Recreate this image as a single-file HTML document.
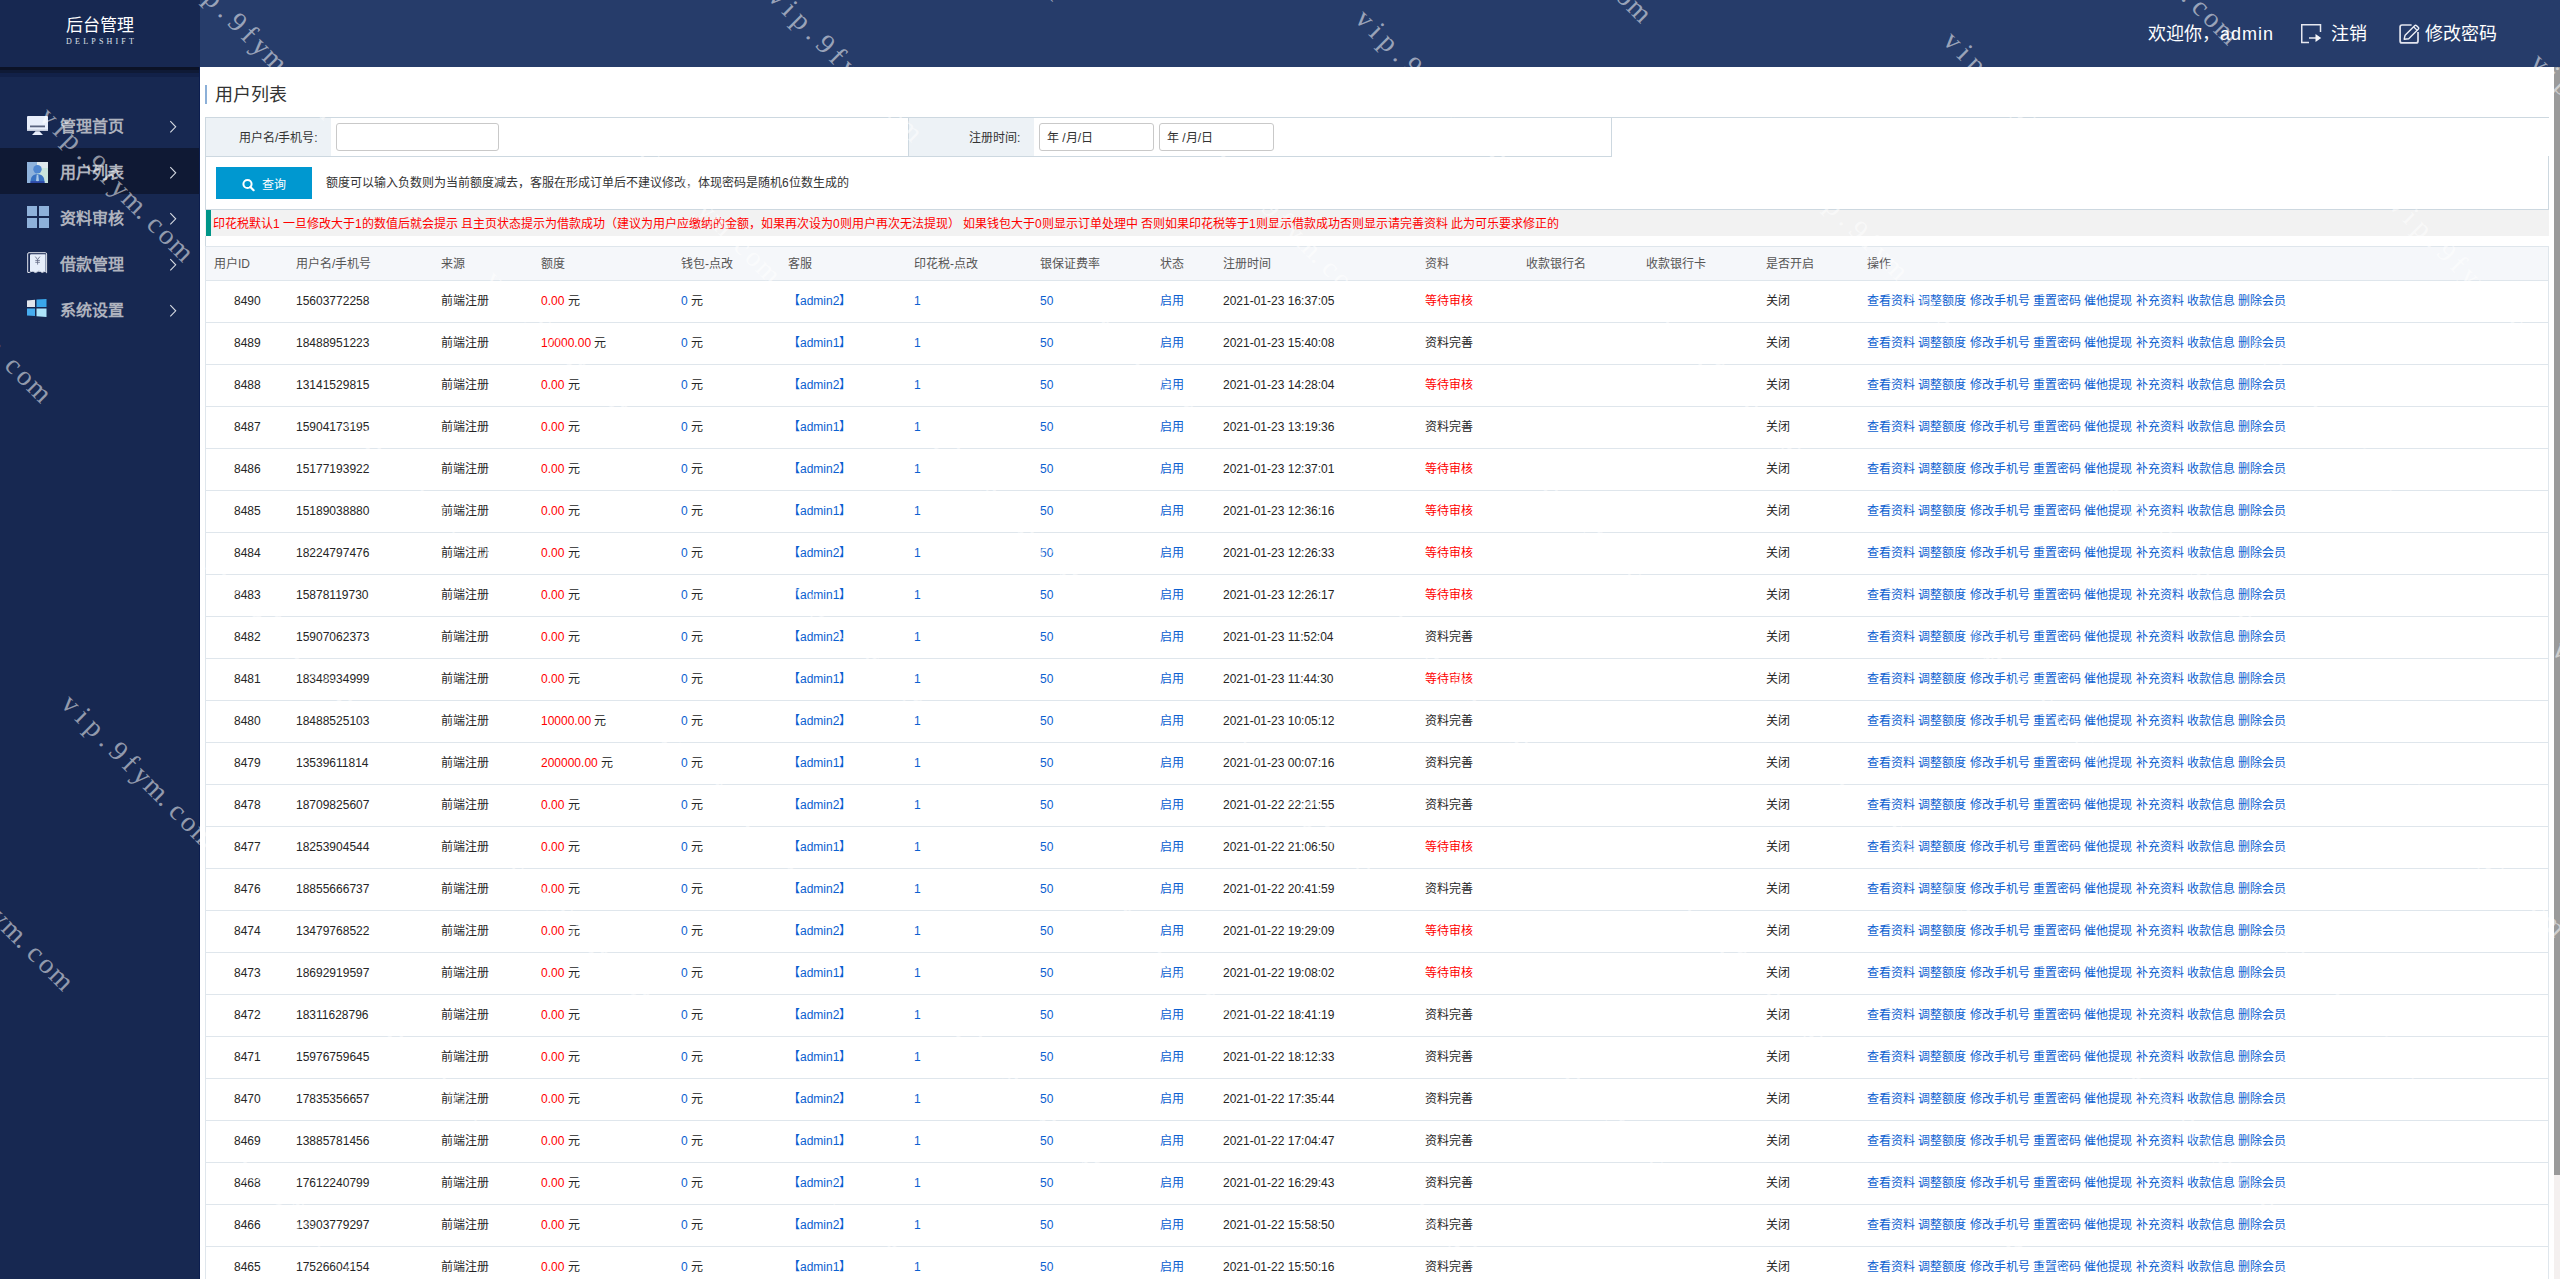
<!DOCTYPE html><html lang="zh-CN"><head><meta charset="utf-8"><title>用户列表</title><style>
*{margin:0;padding:0;box-sizing:border-box}
html,body{width:2560px;height:1279px;overflow:hidden;background:#fff}
body{position:relative;font-family:"Liberation Sans",sans-serif;font-size:12px;color:#333}
.abs{position:absolute}
#side{position:absolute;left:0;top:0;width:200px;height:1279px;background:#172851}
#logo{position:absolute;left:0;top:0;width:200px;height:67px;background:#172851}
#logo .t{position:absolute;left:0;width:200px;top:16px;text-align:center;color:#fff;font-size:17px;line-height:20px}
#logo .s{position:absolute;left:0;width:200px;top:38px;text-align:center;color:#dfe3ea;font-size:8px;line-height:8px;letter-spacing:3.2px;font-family:"Liberation Serif",serif;padding-left:3.2px;transform:scaleY(0.9)}
#logoshadow{position:absolute;left:0;top:67px;width:199px;height:10px;background:linear-gradient(to bottom,#0b1226 0,#0b1226 3px,#0f1a36 3px,#0f1a36 6px,#122148 6px,#122148 10px,#172851 10px)}
.mi{position:absolute;left:0;width:200px;height:46px}
.mi.on{background:#0f1934}
.mi .ic{position:absolute;left:27px;top:13px;width:22px;height:22px}
.mi .tx{position:absolute;left:60px;top:16px;font-size:16px;line-height:18px;color:#afb3be;font-weight:600}
.mi .ch{position:absolute;left:169px;top:18px;width:8px;height:14px}
#hdr{position:absolute;left:200px;top:0;width:2360px;height:67px;background:#263c6a}
#hdr .w{position:absolute;top:24px;font-size:18px;line-height:20px;color:#fff;white-space:nowrap}
#sb{position:absolute;left:2554px;top:67px;width:6px;height:1212px;background:#f4f0ef}
#sbt{position:absolute;left:2554px;top:67px;width:6px;height:1108px;background:#9a9a9a}
#ttl{position:absolute;left:215px;top:85px;font-size:18px;line-height:20px;color:#333}
#ttlbar{position:absolute;left:205px;top:85px;width:2px;height:19px;background:#8cb0d8}
.line{position:absolute;background:#cdd8e0}
.cell{position:absolute;background:#edf2f6}
.lbl{position:absolute;font-size:12px;line-height:14px;color:#333;white-space:nowrap}
.inp{position:absolute;height:28px;border:1px solid #c9c9c9;border-radius:3px;background:#fff}
.inp span{position:absolute;left:7px;top:7px;font-size:12px;line-height:14px;color:#333}
#btn{position:absolute;left:216px;top:167px;width:96px;height:32px;background:#0098d0}
#note{position:absolute;left:326px;top:176px;font-size:12px;line-height:14px;color:#333;white-space:nowrap}
#red{position:absolute;left:205px;top:210px;width:2344px;height:26px;background:#f2f2f2}
#redbar{position:absolute;left:206px;top:210px;width:5px;height:26px;background:#009688}
#redtx{position:absolute;left:213px;top:217px;font-size:12px;line-height:14px;color:#ff0000;white-space:nowrap}
#thead{position:absolute;left:205px;top:246px;width:2344px;height:35px;background:#f5f7fa;border:1px solid #dfe6ec}
.th{position:absolute;top:10px;font-size:12px;line-height:14px;color:#555555;white-space:nowrap}
.tr{position:absolute;left:205px;width:2344px;height:42px;border:1px solid #dfe6ec;border-top:none;background:#fff}
.td{position:absolute;top:13px;font-size:12px;line-height:14px;color:#252525;white-space:nowrap}
.r{color:#ff0000}
.b{color:#0b60d0}
.wm{position:absolute;font-family:"Liberation Serif",serif;font-size:28px;line-height:28px;color:rgba(255,255,255,0.55);transform-origin:0 0;transform:rotate(45deg);white-space:nowrap;pointer-events:none}
.wm i{font-style:normal;display:inline-block;width:16.8px;text-align:center}
</style></head><body>
<div id="side">
<div id="logo"><div class="t">后台管理</div><div class="s">DELPSHIFT</div></div><div id="logoshadow"></div>
<div class="mi" style="top:102px"><svg class="ic" viewBox="0 0 22 22" width="22" height="22"><rect x="0" y="1" width="21" height="15" rx="1" fill="#e8eefb"/><rect x="3" y="10.5" width="15" height="1.8" fill="#5a6480"/><rect x="0" y="14.5" width="21" height="1.5" fill="#c4cbdc"/><path d="M8.5 16.2 L12.5 16.2 L16 20 L5 20 Z" fill="#e8eefb"/></svg><div class="tx">管理首页</div><svg class="ch" viewBox="0 0 8 14" width="8" height="14"><path d="M1.3 1.2 L6.7 6.8 L1.3 12.4" fill="none" stroke="#d6dae2" stroke-width="1.1"/></svg></div>
<div class="mi on" style="top:148px"><svg class="ic" style="top:14px" viewBox="0 0 22 22" width="22" height="22"><rect x="0" y="0" width="21" height="21" fill="#dfe8ec"/><rect x="0" y="0" width="10" height="21" fill="#8fb3dc"/><rect x="10" y="6" width="11" height="15" fill="#c8e4dc"/><circle cx="10.5" cy="7.2" r="4.2" fill="#4f86d0"/><path d="M3.5 21 C3.5 14.5 6 12.3 10.5 12.3 C15 12.3 17.5 14.5 17.5 21 Z" fill="#3a73c2"/><path d="M9.7 12.8 L11.3 12.8 L11.9 18.5 L10.5 20.5 L9.1 18.5 Z" fill="#a9c8e8"/><rect x="3.5" y="19.2" width="14" height="1.8" fill="#2f4aa8"/></svg><div class="tx">用户列表</div><svg class="ch" viewBox="0 0 8 14" width="8" height="14"><path d="M1.3 1.2 L6.7 6.8 L1.3 12.4" fill="none" stroke="#d6dae2" stroke-width="1.1"/></svg></div>
<div class="mi" style="top:194px"><svg class="ic" style="top:12px" viewBox="0 0 22 22" width="22" height="22"><g fill="#8eb1da"><rect x="0" y="0" width="10" height="10"/><rect x="12" y="0" width="10" height="10"/><rect x="0" y="12" width="10" height="10"/><rect x="12" y="12" width="10" height="10"/></g></svg><div class="tx">资料审核</div><svg class="ch" viewBox="0 0 8 14" width="8" height="14"><path d="M1.3 1.2 L6.7 6.8 L1.3 12.4" fill="none" stroke="#d6dae2" stroke-width="1.1"/></svg></div>
<div class="mi" style="top:240px"><svg class="ic" style="top:12px" viewBox="0 0 22 22" width="22" height="22"><path d="M0.7 2 Q0.7 0.7 2 0.7 H18.3 Q19.6 0.7 19.6 2 V20.8 Q18.4 19 17 19.6 Q15.4 21.4 13.6 19.6 Q11.8 18.6 10.2 19.8 Q8.4 21.4 6.6 19.6 Q5 18.6 3.6 19.8 Q2 21 0.7 20.4 Z" fill="#1a2a55" stroke="#e2e6ee" stroke-width="1"/><path d="M3 3.2 Q3 2.2 4 2.2 H18.6 V19.6 Q17.6 18.6 16.6 19.4 Q15.2 20.6 13.6 19.4 Q11.9 18.3 10.2 19.5 Q8.5 20.6 6.8 19.4 Q5.2 18.4 3 19.4 Z" fill="#e6eefb"/><path d="M8.3 4.6 L10.6 7.6 L12.9 4.6 M10.6 7.6 V12.6 M8.3 8.4 H12.9 M8.3 10.3 H12.9" stroke="#5d6480" stroke-width="0.8" fill="none"/></svg><div class="tx">借款管理</div><svg class="ch" viewBox="0 0 8 14" width="8" height="14"><path d="M1.3 1.2 L6.7 6.8 L1.3 12.4" fill="none" stroke="#d6dae2" stroke-width="1.1"/></svg></div>
<div class="mi" style="top:286px"><svg class="ic" viewBox="0 0 22 22" width="22" height="22"><path d="M0 1.5 L8 0.8 V8 H0 Z" fill="#e1e5ec"/><path d="M9.5 0.6 L19.5 0 V8 H9.5 Z" fill="#3aa7ea"/><path d="M0 9.5 H8 V17 L0 16.4 Z" fill="#47adf0"/><path d="M9.5 9.5 H19.5 V18 L9.5 17.2 Z" fill="#aee5fb"/></svg><div class="tx">系统设置</div><svg class="ch" viewBox="0 0 8 14" width="8" height="14"><path d="M1.3 1.2 L6.7 6.8 L1.3 12.4" fill="none" stroke="#d6dae2" stroke-width="1.1"/></svg></div>
<div class="abs" style="left:199px;top:67px;width:1px;height:1212px;background:#0b1d4f"></div>
</div>
<div id="hdr">
<div class="w" style="left:1948px">欢迎你，<span style="letter-spacing:1px">admin</span></div>
<svg class="abs" style="left:2101px;top:24px" width="21" height="20" viewBox="0 0 21 20"><path d="M8 18.5 H0.75 V0.75 H19.5 V8" fill="none" stroke="#e6e8f0" stroke-width="1.5"/><path d="M8 14 H15.5" stroke="#e6e8f0" stroke-width="1.5"/><path d="M14.5 10 L20.2 14 L14.5 18 Z" fill="#f4f5f8"/></svg>
<div class="w" style="left:2131px">注销</div>
<svg class="abs" style="left:2199px;top:24px" width="21" height="21" viewBox="0 0 21 21"><path d="M12.6 1 H3.1 Q1.1 1 1.1 3 V16.9 Q1.1 18.9 3.1 18.9 H17 Q19 18.9 19 16.9 V8" fill="none" stroke="#e2e4ee" stroke-width="1.7"/><path d="M5.2 15.2 L6.1 11.2 L15.6 1.7 Q16.6 0.7 17.6 1.7 L19.2 3.3 Q20.2 4.3 19.2 5.3 L9.7 14.8 Z" fill="none" stroke="#eceef5" stroke-width="1.4" stroke-linejoin="round"/><path d="M14.6 2.8 L18.2 6.4" stroke="#eceef5" stroke-width="1.3"/></svg>
<div class="w" style="left:2225px">修改密码</div>
</div>
<div id="sb"></div><div id="sbt"></div>
<div id="ttlbar"></div><div id="ttl">用户列表</div>
<div class="cell" style="left:206px;top:118px;width:125px;height:38px"></div>
<div class="cell" style="left:909px;top:118px;width:125px;height:38px"></div>
<div class="line" style="left:205px;top:117px;width:2344px;height:1px"></div>
<div class="line" style="left:205px;top:156px;width:1407px;height:1px"></div>
<div class="line" style="left:205px;top:117px;width:1px;height:129px"></div>
<div class="line" style="left:908px;top:117px;width:1px;height:40px"></div>
<div class="line" style="left:1611px;top:117px;width:1px;height:40px"></div>
<div class="line" style="left:2548px;top:156px;width:1px;height:54px"></div>
<div class="line" style="left:205px;top:209px;width:2344px;height:1px"></div>
<div class="lbl" style="left:239px;top:131px">用户名/手机号:</div>
<div class="lbl" style="left:969px;top:131px">注册时间:</div>
<div class="inp" style="left:336px;top:123px;width:163px"></div>
<div class="inp" style="left:1039px;top:123px;width:115px"><span>年 /月/日</span></div>
<div class="inp" style="left:1159px;top:123px;width:115px"><span>年 /月/日</span></div>
<div id="btn"><svg class="abs" style="left:25px;top:11px" width="14" height="14" viewBox="0 0 14 14"><circle cx="6.5" cy="6" r="4.1" fill="none" stroke="#fff" stroke-width="2"/><path d="M9.4 9 L12.6 12.2" stroke="#fff" stroke-width="2.2" stroke-linecap="round"/></svg><div class="abs" style="left:46px;top:11px;color:#fff;font-size:12px;line-height:14px">查询</div></div>
<div id="note">额度可以输入负数则为当前额度减去，客服在形成订单后不建议修改，体现密码是随机6位数生成的</div>
<div id="red"></div><div id="redbar"></div><div id="redtx">印花税默认1 一旦修改大于1的数值后就会提示 且主页状态提示为借款成功（建议为用户应缴纳的金额，如果再次设为0则用户再次无法提现） 如果钱包大于0则显示订单处理中 否则如果印花税等于1则显示借款成功否则显示请完善资料 此为可乐要求修正的</div>
<div id="thead">
<div class="th" style="left:8px">用户ID</div>
<div class="th" style="left:90px">用户名/手机号</div>
<div class="th" style="left:235px">来源</div>
<div class="th" style="left:335px">额度</div>
<div class="th" style="left:475px">钱包-点改</div>
<div class="th" style="left:582px">客服</div>
<div class="th" style="left:708px">印花税-点改</div>
<div class="th" style="left:834px">银保证费率</div>
<div class="th" style="left:954px">状态</div>
<div class="th" style="left:1017px">注册时间</div>
<div class="th" style="left:1219px">资料</div>
<div class="th" style="left:1320px">收款银行名</div>
<div class="th" style="left:1440px">收款银行卡</div>
<div class="th" style="left:1560px">是否开启</div>
<div class="th" style="left:1661px">操作</div>
</div>
<div class="tr" style="top:281px"><div class="td " style="left:28px">8490</div><div class="td " style="left:90px">15603772258</div><div class="td " style="left:235px">前端注册</div><div class="td " style="left:335px"><span class="r">0.00</span> 元</div><div class="td " style="left:475px"><span class="b">0</span> 元</div><div class="td b" style="left:582px">【admin2】</div><div class="td b" style="left:708px">1</div><div class="td b" style="left:834px">50</div><div class="td b" style="left:954px">启用</div><div class="td " style="left:1017px">2021-01-23 16:37:05</div><div class="td r" style="left:1219px">等待审核</div><div class="td " style="left:1560px">关闭</div><div class="td b" style="left:1661px">查看资料 调整额度 修改手机号 重置密码 催他提现 补充资料 收款信息 删除会员</div></div>
<div class="tr" style="top:323px"><div class="td " style="left:28px">8489</div><div class="td " style="left:90px">18488951223</div><div class="td " style="left:235px">前端注册</div><div class="td " style="left:335px"><span class="r">10000.00</span> 元</div><div class="td " style="left:475px"><span class="b">0</span> 元</div><div class="td b" style="left:582px">【admin1】</div><div class="td b" style="left:708px">1</div><div class="td b" style="left:834px">50</div><div class="td b" style="left:954px">启用</div><div class="td " style="left:1017px">2021-01-23 15:40:08</div><div class="td " style="left:1219px">资料完善</div><div class="td " style="left:1560px">关闭</div><div class="td b" style="left:1661px">查看资料 调整额度 修改手机号 重置密码 催他提现 补充资料 收款信息 删除会员</div></div>
<div class="tr" style="top:365px"><div class="td " style="left:28px">8488</div><div class="td " style="left:90px">13141529815</div><div class="td " style="left:235px">前端注册</div><div class="td " style="left:335px"><span class="r">0.00</span> 元</div><div class="td " style="left:475px"><span class="b">0</span> 元</div><div class="td b" style="left:582px">【admin2】</div><div class="td b" style="left:708px">1</div><div class="td b" style="left:834px">50</div><div class="td b" style="left:954px">启用</div><div class="td " style="left:1017px">2021-01-23 14:28:04</div><div class="td r" style="left:1219px">等待审核</div><div class="td " style="left:1560px">关闭</div><div class="td b" style="left:1661px">查看资料 调整额度 修改手机号 重置密码 催他提现 补充资料 收款信息 删除会员</div></div>
<div class="tr" style="top:407px"><div class="td " style="left:28px">8487</div><div class="td " style="left:90px">15904173195</div><div class="td " style="left:235px">前端注册</div><div class="td " style="left:335px"><span class="r">0.00</span> 元</div><div class="td " style="left:475px"><span class="b">0</span> 元</div><div class="td b" style="left:582px">【admin1】</div><div class="td b" style="left:708px">1</div><div class="td b" style="left:834px">50</div><div class="td b" style="left:954px">启用</div><div class="td " style="left:1017px">2021-01-23 13:19:36</div><div class="td " style="left:1219px">资料完善</div><div class="td " style="left:1560px">关闭</div><div class="td b" style="left:1661px">查看资料 调整额度 修改手机号 重置密码 催他提现 补充资料 收款信息 删除会员</div></div>
<div class="tr" style="top:449px"><div class="td " style="left:28px">8486</div><div class="td " style="left:90px">15177193922</div><div class="td " style="left:235px">前端注册</div><div class="td " style="left:335px"><span class="r">0.00</span> 元</div><div class="td " style="left:475px"><span class="b">0</span> 元</div><div class="td b" style="left:582px">【admin2】</div><div class="td b" style="left:708px">1</div><div class="td b" style="left:834px">50</div><div class="td b" style="left:954px">启用</div><div class="td " style="left:1017px">2021-01-23 12:37:01</div><div class="td r" style="left:1219px">等待审核</div><div class="td " style="left:1560px">关闭</div><div class="td b" style="left:1661px">查看资料 调整额度 修改手机号 重置密码 催他提现 补充资料 收款信息 删除会员</div></div>
<div class="tr" style="top:491px"><div class="td " style="left:28px">8485</div><div class="td " style="left:90px">15189038880</div><div class="td " style="left:235px">前端注册</div><div class="td " style="left:335px"><span class="r">0.00</span> 元</div><div class="td " style="left:475px"><span class="b">0</span> 元</div><div class="td b" style="left:582px">【admin1】</div><div class="td b" style="left:708px">1</div><div class="td b" style="left:834px">50</div><div class="td b" style="left:954px">启用</div><div class="td " style="left:1017px">2021-01-23 12:36:16</div><div class="td r" style="left:1219px">等待审核</div><div class="td " style="left:1560px">关闭</div><div class="td b" style="left:1661px">查看资料 调整额度 修改手机号 重置密码 催他提现 补充资料 收款信息 删除会员</div></div>
<div class="tr" style="top:533px"><div class="td " style="left:28px">8484</div><div class="td " style="left:90px">18224797476</div><div class="td " style="left:235px">前端注册</div><div class="td " style="left:335px"><span class="r">0.00</span> 元</div><div class="td " style="left:475px"><span class="b">0</span> 元</div><div class="td b" style="left:582px">【admin2】</div><div class="td b" style="left:708px">1</div><div class="td b" style="left:834px">50</div><div class="td b" style="left:954px">启用</div><div class="td " style="left:1017px">2021-01-23 12:26:33</div><div class="td r" style="left:1219px">等待审核</div><div class="td " style="left:1560px">关闭</div><div class="td b" style="left:1661px">查看资料 调整额度 修改手机号 重置密码 催他提现 补充资料 收款信息 删除会员</div></div>
<div class="tr" style="top:575px"><div class="td " style="left:28px">8483</div><div class="td " style="left:90px">15878119730</div><div class="td " style="left:235px">前端注册</div><div class="td " style="left:335px"><span class="r">0.00</span> 元</div><div class="td " style="left:475px"><span class="b">0</span> 元</div><div class="td b" style="left:582px">【admin1】</div><div class="td b" style="left:708px">1</div><div class="td b" style="left:834px">50</div><div class="td b" style="left:954px">启用</div><div class="td " style="left:1017px">2021-01-23 12:26:17</div><div class="td r" style="left:1219px">等待审核</div><div class="td " style="left:1560px">关闭</div><div class="td b" style="left:1661px">查看资料 调整额度 修改手机号 重置密码 催他提现 补充资料 收款信息 删除会员</div></div>
<div class="tr" style="top:617px"><div class="td " style="left:28px">8482</div><div class="td " style="left:90px">15907062373</div><div class="td " style="left:235px">前端注册</div><div class="td " style="left:335px"><span class="r">0.00</span> 元</div><div class="td " style="left:475px"><span class="b">0</span> 元</div><div class="td b" style="left:582px">【admin2】</div><div class="td b" style="left:708px">1</div><div class="td b" style="left:834px">50</div><div class="td b" style="left:954px">启用</div><div class="td " style="left:1017px">2021-01-23 11:52:04</div><div class="td " style="left:1219px">资料完善</div><div class="td " style="left:1560px">关闭</div><div class="td b" style="left:1661px">查看资料 调整额度 修改手机号 重置密码 催他提现 补充资料 收款信息 删除会员</div></div>
<div class="tr" style="top:659px"><div class="td " style="left:28px">8481</div><div class="td " style="left:90px">18348934999</div><div class="td " style="left:235px">前端注册</div><div class="td " style="left:335px"><span class="r">0.00</span> 元</div><div class="td " style="left:475px"><span class="b">0</span> 元</div><div class="td b" style="left:582px">【admin1】</div><div class="td b" style="left:708px">1</div><div class="td b" style="left:834px">50</div><div class="td b" style="left:954px">启用</div><div class="td " style="left:1017px">2021-01-23 11:44:30</div><div class="td r" style="left:1219px">等待审核</div><div class="td " style="left:1560px">关闭</div><div class="td b" style="left:1661px">查看资料 调整额度 修改手机号 重置密码 催他提现 补充资料 收款信息 删除会员</div></div>
<div class="tr" style="top:701px"><div class="td " style="left:28px">8480</div><div class="td " style="left:90px">18488525103</div><div class="td " style="left:235px">前端注册</div><div class="td " style="left:335px"><span class="r">10000.00</span> 元</div><div class="td " style="left:475px"><span class="b">0</span> 元</div><div class="td b" style="left:582px">【admin2】</div><div class="td b" style="left:708px">1</div><div class="td b" style="left:834px">50</div><div class="td b" style="left:954px">启用</div><div class="td " style="left:1017px">2021-01-23 10:05:12</div><div class="td " style="left:1219px">资料完善</div><div class="td " style="left:1560px">关闭</div><div class="td b" style="left:1661px">查看资料 调整额度 修改手机号 重置密码 催他提现 补充资料 收款信息 删除会员</div></div>
<div class="tr" style="top:743px"><div class="td " style="left:28px">8479</div><div class="td " style="left:90px">13539611814</div><div class="td " style="left:235px">前端注册</div><div class="td " style="left:335px"><span class="r">200000.00</span> 元</div><div class="td " style="left:475px"><span class="b">0</span> 元</div><div class="td b" style="left:582px">【admin1】</div><div class="td b" style="left:708px">1</div><div class="td b" style="left:834px">50</div><div class="td b" style="left:954px">启用</div><div class="td " style="left:1017px">2021-01-23 00:07:16</div><div class="td " style="left:1219px">资料完善</div><div class="td " style="left:1560px">关闭</div><div class="td b" style="left:1661px">查看资料 调整额度 修改手机号 重置密码 催他提现 补充资料 收款信息 删除会员</div></div>
<div class="tr" style="top:785px"><div class="td " style="left:28px">8478</div><div class="td " style="left:90px">18709825607</div><div class="td " style="left:235px">前端注册</div><div class="td " style="left:335px"><span class="r">0.00</span> 元</div><div class="td " style="left:475px"><span class="b">0</span> 元</div><div class="td b" style="left:582px">【admin2】</div><div class="td b" style="left:708px">1</div><div class="td b" style="left:834px">50</div><div class="td b" style="left:954px">启用</div><div class="td " style="left:1017px">2021-01-22 22:21:55</div><div class="td " style="left:1219px">资料完善</div><div class="td " style="left:1560px">关闭</div><div class="td b" style="left:1661px">查看资料 调整额度 修改手机号 重置密码 催他提现 补充资料 收款信息 删除会员</div></div>
<div class="tr" style="top:827px"><div class="td " style="left:28px">8477</div><div class="td " style="left:90px">18253904544</div><div class="td " style="left:235px">前端注册</div><div class="td " style="left:335px"><span class="r">0.00</span> 元</div><div class="td " style="left:475px"><span class="b">0</span> 元</div><div class="td b" style="left:582px">【admin1】</div><div class="td b" style="left:708px">1</div><div class="td b" style="left:834px">50</div><div class="td b" style="left:954px">启用</div><div class="td " style="left:1017px">2021-01-22 21:06:50</div><div class="td r" style="left:1219px">等待审核</div><div class="td " style="left:1560px">关闭</div><div class="td b" style="left:1661px">查看资料 调整额度 修改手机号 重置密码 催他提现 补充资料 收款信息 删除会员</div></div>
<div class="tr" style="top:869px"><div class="td " style="left:28px">8476</div><div class="td " style="left:90px">18855666737</div><div class="td " style="left:235px">前端注册</div><div class="td " style="left:335px"><span class="r">0.00</span> 元</div><div class="td " style="left:475px"><span class="b">0</span> 元</div><div class="td b" style="left:582px">【admin2】</div><div class="td b" style="left:708px">1</div><div class="td b" style="left:834px">50</div><div class="td b" style="left:954px">启用</div><div class="td " style="left:1017px">2021-01-22 20:41:59</div><div class="td " style="left:1219px">资料完善</div><div class="td " style="left:1560px">关闭</div><div class="td b" style="left:1661px">查看资料 调整额度 修改手机号 重置密码 催他提现 补充资料 收款信息 删除会员</div></div>
<div class="tr" style="top:911px"><div class="td " style="left:28px">8474</div><div class="td " style="left:90px">13479768522</div><div class="td " style="left:235px">前端注册</div><div class="td " style="left:335px"><span class="r">0.00</span> 元</div><div class="td " style="left:475px"><span class="b">0</span> 元</div><div class="td b" style="left:582px">【admin2】</div><div class="td b" style="left:708px">1</div><div class="td b" style="left:834px">50</div><div class="td b" style="left:954px">启用</div><div class="td " style="left:1017px">2021-01-22 19:29:09</div><div class="td r" style="left:1219px">等待审核</div><div class="td " style="left:1560px">关闭</div><div class="td b" style="left:1661px">查看资料 调整额度 修改手机号 重置密码 催他提现 补充资料 收款信息 删除会员</div></div>
<div class="tr" style="top:953px"><div class="td " style="left:28px">8473</div><div class="td " style="left:90px">18692919597</div><div class="td " style="left:235px">前端注册</div><div class="td " style="left:335px"><span class="r">0.00</span> 元</div><div class="td " style="left:475px"><span class="b">0</span> 元</div><div class="td b" style="left:582px">【admin1】</div><div class="td b" style="left:708px">1</div><div class="td b" style="left:834px">50</div><div class="td b" style="left:954px">启用</div><div class="td " style="left:1017px">2021-01-22 19:08:02</div><div class="td r" style="left:1219px">等待审核</div><div class="td " style="left:1560px">关闭</div><div class="td b" style="left:1661px">查看资料 调整额度 修改手机号 重置密码 催他提现 补充资料 收款信息 删除会员</div></div>
<div class="tr" style="top:995px"><div class="td " style="left:28px">8472</div><div class="td " style="left:90px">18311628796</div><div class="td " style="left:235px">前端注册</div><div class="td " style="left:335px"><span class="r">0.00</span> 元</div><div class="td " style="left:475px"><span class="b">0</span> 元</div><div class="td b" style="left:582px">【admin2】</div><div class="td b" style="left:708px">1</div><div class="td b" style="left:834px">50</div><div class="td b" style="left:954px">启用</div><div class="td " style="left:1017px">2021-01-22 18:41:19</div><div class="td " style="left:1219px">资料完善</div><div class="td " style="left:1560px">关闭</div><div class="td b" style="left:1661px">查看资料 调整额度 修改手机号 重置密码 催他提现 补充资料 收款信息 删除会员</div></div>
<div class="tr" style="top:1037px"><div class="td " style="left:28px">8471</div><div class="td " style="left:90px">15976759645</div><div class="td " style="left:235px">前端注册</div><div class="td " style="left:335px"><span class="r">0.00</span> 元</div><div class="td " style="left:475px"><span class="b">0</span> 元</div><div class="td b" style="left:582px">【admin1】</div><div class="td b" style="left:708px">1</div><div class="td b" style="left:834px">50</div><div class="td b" style="left:954px">启用</div><div class="td " style="left:1017px">2021-01-22 18:12:33</div><div class="td " style="left:1219px">资料完善</div><div class="td " style="left:1560px">关闭</div><div class="td b" style="left:1661px">查看资料 调整额度 修改手机号 重置密码 催他提现 补充资料 收款信息 删除会员</div></div>
<div class="tr" style="top:1079px"><div class="td " style="left:28px">8470</div><div class="td " style="left:90px">17835356657</div><div class="td " style="left:235px">前端注册</div><div class="td " style="left:335px"><span class="r">0.00</span> 元</div><div class="td " style="left:475px"><span class="b">0</span> 元</div><div class="td b" style="left:582px">【admin2】</div><div class="td b" style="left:708px">1</div><div class="td b" style="left:834px">50</div><div class="td b" style="left:954px">启用</div><div class="td " style="left:1017px">2021-01-22 17:35:44</div><div class="td " style="left:1219px">资料完善</div><div class="td " style="left:1560px">关闭</div><div class="td b" style="left:1661px">查看资料 调整额度 修改手机号 重置密码 催他提现 补充资料 收款信息 删除会员</div></div>
<div class="tr" style="top:1121px"><div class="td " style="left:28px">8469</div><div class="td " style="left:90px">13885781456</div><div class="td " style="left:235px">前端注册</div><div class="td " style="left:335px"><span class="r">0.00</span> 元</div><div class="td " style="left:475px"><span class="b">0</span> 元</div><div class="td b" style="left:582px">【admin1】</div><div class="td b" style="left:708px">1</div><div class="td b" style="left:834px">50</div><div class="td b" style="left:954px">启用</div><div class="td " style="left:1017px">2021-01-22 17:04:47</div><div class="td " style="left:1219px">资料完善</div><div class="td " style="left:1560px">关闭</div><div class="td b" style="left:1661px">查看资料 调整额度 修改手机号 重置密码 催他提现 补充资料 收款信息 删除会员</div></div>
<div class="tr" style="top:1163px"><div class="td " style="left:28px">8468</div><div class="td " style="left:90px">17612240799</div><div class="td " style="left:235px">前端注册</div><div class="td " style="left:335px"><span class="r">0.00</span> 元</div><div class="td " style="left:475px"><span class="b">0</span> 元</div><div class="td b" style="left:582px">【admin2】</div><div class="td b" style="left:708px">1</div><div class="td b" style="left:834px">50</div><div class="td b" style="left:954px">启用</div><div class="td " style="left:1017px">2021-01-22 16:29:43</div><div class="td " style="left:1219px">资料完善</div><div class="td " style="left:1560px">关闭</div><div class="td b" style="left:1661px">查看资料 调整额度 修改手机号 重置密码 催他提现 补充资料 收款信息 删除会员</div></div>
<div class="tr" style="top:1205px"><div class="td " style="left:28px">8466</div><div class="td " style="left:90px">13903779297</div><div class="td " style="left:235px">前端注册</div><div class="td " style="left:335px"><span class="r">0.00</span> 元</div><div class="td " style="left:475px"><span class="b">0</span> 元</div><div class="td b" style="left:582px">【admin2】</div><div class="td b" style="left:708px">1</div><div class="td b" style="left:834px">50</div><div class="td b" style="left:954px">启用</div><div class="td " style="left:1017px">2021-01-22 15:58:50</div><div class="td " style="left:1219px">资料完善</div><div class="td " style="left:1560px">关闭</div><div class="td b" style="left:1661px">查看资料 调整额度 修改手机号 重置密码 催他提现 补充资料 收款信息 删除会员</div></div>
<div class="tr" style="top:1247px"><div class="td " style="left:28px">8465</div><div class="td " style="left:90px">17526604154</div><div class="td " style="left:235px">前端注册</div><div class="td " style="left:335px"><span class="r">0.00</span> 元</div><div class="td " style="left:475px"><span class="b">0</span> 元</div><div class="td b" style="left:582px">【admin1】</div><div class="td b" style="left:708px">1</div><div class="td b" style="left:834px">50</div><div class="td b" style="left:954px">启用</div><div class="td " style="left:1017px">2021-01-22 15:50:16</div><div class="td " style="left:1219px">资料完善</div><div class="td " style="left:1560px">关闭</div><div class="td b" style="left:1661px">查看资料 调整额度 修改手机号 重置密码 催他提现 补充资料 收款信息 删除会员</div></div>
<div class="wm" style="left:335.3px;top:-182.3px"><i>v</i><i>i</i><i>p</i><i>.</i><i>9</i><i>f</i><i>y</i><i>m</i><i>.</i><i>c</i><i>o</i><i>m</i></div>
<div class="wm" style="left:193.9px;top:-40.9px"><i>v</i><i>i</i><i>p</i><i>.</i><i>9</i><i>f</i><i>y</i><i>m</i><i>.</i><i>c</i><i>o</i><i>m</i></div>
<div class="wm" style="left:52.5px;top:100.5px"><i>v</i><i>i</i><i>p</i><i>.</i><i>9</i><i>f</i><i>y</i><i>m</i><i>.</i><i>c</i><i>o</i><i>m</i></div>
<div class="wm" style="left:-88.9px;top:241.9px"><i>v</i><i>i</i><i>p</i><i>.</i><i>9</i><i>f</i><i>y</i><i>m</i><i>.</i><i>c</i><i>o</i><i>m</i></div>
<div class="wm" style="left:922.9px;top:-160.3px"><i>v</i><i>i</i><i>p</i><i>.</i><i>9</i><i>f</i><i>y</i><i>m</i><i>.</i><i>c</i><i>o</i><i>m</i></div>
<div class="wm" style="left:781.5px;top:-18.9px"><i>v</i><i>i</i><i>p</i><i>.</i><i>9</i><i>f</i><i>y</i><i>m</i><i>.</i><i>c</i><i>o</i><i>m</i></div>
<div class="wm" style="left:640.1px;top:122.5px"><i>v</i><i>i</i><i>p</i><i>.</i><i>9</i><i>f</i><i>y</i><i>m</i><i>.</i><i>c</i><i>o</i><i>m</i></div>
<div class="wm" style="left:498.7px;top:263.9px"><i>v</i><i>i</i><i>p</i><i>.</i><i>9</i><i>f</i><i>y</i><i>m</i><i>.</i><i>c</i><i>o</i><i>m</i></div>
<div class="wm" style="left:357.3px;top:405.3px"><i>v</i><i>i</i><i>p</i><i>.</i><i>9</i><i>f</i><i>y</i><i>m</i><i>.</i><i>c</i><i>o</i><i>m</i></div>
<div class="wm" style="left:215.9px;top:546.7px"><i>v</i><i>i</i><i>p</i><i>.</i><i>9</i><i>f</i><i>y</i><i>m</i><i>.</i><i>c</i><i>o</i><i>m</i></div>
<div class="wm" style="left:74.5px;top:688.1px"><i>v</i><i>i</i><i>p</i><i>.</i><i>9</i><i>f</i><i>y</i><i>m</i><i>.</i><i>c</i><i>o</i><i>m</i></div>
<div class="wm" style="left:-66.9px;top:829.5px"><i>v</i><i>i</i><i>p</i><i>.</i><i>9</i><i>f</i><i>y</i><i>m</i><i>.</i><i>c</i><i>o</i><i>m</i></div>
<div class="wm" style="left:1510.5px;top:-138.3px"><i>v</i><i>i</i><i>p</i><i>.</i><i>9</i><i>f</i><i>y</i><i>m</i><i>.</i><i>c</i><i>o</i><i>m</i></div>
<div class="wm" style="left:1369.1px;top:3.1px"><i>v</i><i>i</i><i>p</i><i>.</i><i>9</i><i>f</i><i>y</i><i>m</i><i>.</i><i>c</i><i>o</i><i>m</i></div>
<div class="wm" style="left:1227.7px;top:144.5px"><i>v</i><i>i</i><i>p</i><i>.</i><i>9</i><i>f</i><i>y</i><i>m</i><i>.</i><i>c</i><i>o</i><i>m</i></div>
<div class="wm" style="left:1086.3px;top:285.9px"><i>v</i><i>i</i><i>p</i><i>.</i><i>9</i><i>f</i><i>y</i><i>m</i><i>.</i><i>c</i><i>o</i><i>m</i></div>
<div class="wm" style="left:944.9px;top:427.3px"><i>v</i><i>i</i><i>p</i><i>.</i><i>9</i><i>f</i><i>y</i><i>m</i><i>.</i><i>c</i><i>o</i><i>m</i></div>
<div class="wm" style="left:803.5px;top:568.7px"><i>v</i><i>i</i><i>p</i><i>.</i><i>9</i><i>f</i><i>y</i><i>m</i><i>.</i><i>c</i><i>o</i><i>m</i></div>
<div class="wm" style="left:662.1px;top:710.1px"><i>v</i><i>i</i><i>p</i><i>.</i><i>9</i><i>f</i><i>y</i><i>m</i><i>.</i><i>c</i><i>o</i><i>m</i></div>
<div class="wm" style="left:520.7px;top:851.5px"><i>v</i><i>i</i><i>p</i><i>.</i><i>9</i><i>f</i><i>y</i><i>m</i><i>.</i><i>c</i><i>o</i><i>m</i></div>
<div class="wm" style="left:379.3px;top:992.9px"><i>v</i><i>i</i><i>p</i><i>.</i><i>9</i><i>f</i><i>y</i><i>m</i><i>.</i><i>c</i><i>o</i><i>m</i></div>
<div class="wm" style="left:237.9px;top:1134.3px"><i>v</i><i>i</i><i>p</i><i>.</i><i>9</i><i>f</i><i>y</i><i>m</i><i>.</i><i>c</i><i>o</i><i>m</i></div>
<div class="wm" style="left:96.5px;top:1275.7px"><i>v</i><i>i</i><i>p</i><i>.</i><i>9</i><i>f</i><i>y</i><i>m</i><i>.</i><i>c</i><i>o</i><i>m</i></div>
<div class="wm" style="left:2098.1px;top:-116.3px"><i>v</i><i>i</i><i>p</i><i>.</i><i>9</i><i>f</i><i>y</i><i>m</i><i>.</i><i>c</i><i>o</i><i>m</i></div>
<div class="wm" style="left:1956.7px;top:25.1px"><i>v</i><i>i</i><i>p</i><i>.</i><i>9</i><i>f</i><i>y</i><i>m</i><i>.</i><i>c</i><i>o</i><i>m</i></div>
<div class="wm" style="left:1815.3px;top:166.5px"><i>v</i><i>i</i><i>p</i><i>.</i><i>9</i><i>f</i><i>y</i><i>m</i><i>.</i><i>c</i><i>o</i><i>m</i></div>
<div class="wm" style="left:1673.9px;top:307.9px"><i>v</i><i>i</i><i>p</i><i>.</i><i>9</i><i>f</i><i>y</i><i>m</i><i>.</i><i>c</i><i>o</i><i>m</i></div>
<div class="wm" style="left:1532.5px;top:449.3px"><i>v</i><i>i</i><i>p</i><i>.</i><i>9</i><i>f</i><i>y</i><i>m</i><i>.</i><i>c</i><i>o</i><i>m</i></div>
<div class="wm" style="left:1391.1px;top:590.7px"><i>v</i><i>i</i><i>p</i><i>.</i><i>9</i><i>f</i><i>y</i><i>m</i><i>.</i><i>c</i><i>o</i><i>m</i></div>
<div class="wm" style="left:1249.7px;top:732.1px"><i>v</i><i>i</i><i>p</i><i>.</i><i>9</i><i>f</i><i>y</i><i>m</i><i>.</i><i>c</i><i>o</i><i>m</i></div>
<div class="wm" style="left:1108.3px;top:873.5px"><i>v</i><i>i</i><i>p</i><i>.</i><i>9</i><i>f</i><i>y</i><i>m</i><i>.</i><i>c</i><i>o</i><i>m</i></div>
<div class="wm" style="left:966.9px;top:1014.9px"><i>v</i><i>i</i><i>p</i><i>.</i><i>9</i><i>f</i><i>y</i><i>m</i><i>.</i><i>c</i><i>o</i><i>m</i></div>
<div class="wm" style="left:825.5px;top:1156.3px"><i>v</i><i>i</i><i>p</i><i>.</i><i>9</i><i>f</i><i>y</i><i>m</i><i>.</i><i>c</i><i>o</i><i>m</i></div>
<div class="wm" style="left:2544.3px;top:47.1px"><i>v</i><i>i</i><i>p</i><i>.</i><i>9</i><i>f</i><i>y</i><i>m</i><i>.</i><i>c</i><i>o</i><i>m</i></div>
<div class="wm" style="left:2402.9px;top:188.5px"><i>v</i><i>i</i><i>p</i><i>.</i><i>9</i><i>f</i><i>y</i><i>m</i><i>.</i><i>c</i><i>o</i><i>m</i></div>
<div class="wm" style="left:2261.5px;top:329.9px"><i>v</i><i>i</i><i>p</i><i>.</i><i>9</i><i>f</i><i>y</i><i>m</i><i>.</i><i>c</i><i>o</i><i>m</i></div>
<div class="wm" style="left:2120.1px;top:471.3px"><i>v</i><i>i</i><i>p</i><i>.</i><i>9</i><i>f</i><i>y</i><i>m</i><i>.</i><i>c</i><i>o</i><i>m</i></div>
<div class="wm" style="left:1978.7px;top:612.7px"><i>v</i><i>i</i><i>p</i><i>.</i><i>9</i><i>f</i><i>y</i><i>m</i><i>.</i><i>c</i><i>o</i><i>m</i></div>
<div class="wm" style="left:1837.3px;top:754.1px"><i>v</i><i>i</i><i>p</i><i>.</i><i>9</i><i>f</i><i>y</i><i>m</i><i>.</i><i>c</i><i>o</i><i>m</i></div>
<div class="wm" style="left:1695.9px;top:895.5px"><i>v</i><i>i</i><i>p</i><i>.</i><i>9</i><i>f</i><i>y</i><i>m</i><i>.</i><i>c</i><i>o</i><i>m</i></div>
<div class="wm" style="left:1554.5px;top:1036.9px"><i>v</i><i>i</i><i>p</i><i>.</i><i>9</i><i>f</i><i>y</i><i>m</i><i>.</i><i>c</i><i>o</i><i>m</i></div>
<div class="wm" style="left:1413.1px;top:1178.3px"><i>v</i><i>i</i><i>p</i><i>.</i><i>9</i><i>f</i><i>y</i><i>m</i><i>.</i><i>c</i><i>o</i><i>m</i></div>
<div class="wm" style="left:2566.3px;top:634.7px"><i>v</i><i>i</i><i>p</i><i>.</i><i>9</i><i>f</i><i>y</i><i>m</i><i>.</i><i>c</i><i>o</i><i>m</i></div>
<div class="wm" style="left:2424.9px;top:776.1px"><i>v</i><i>i</i><i>p</i><i>.</i><i>9</i><i>f</i><i>y</i><i>m</i><i>.</i><i>c</i><i>o</i><i>m</i></div>
<div class="wm" style="left:2283.5px;top:917.5px"><i>v</i><i>i</i><i>p</i><i>.</i><i>9</i><i>f</i><i>y</i><i>m</i><i>.</i><i>c</i><i>o</i><i>m</i></div>
<div class="wm" style="left:2142.1px;top:1058.9px"><i>v</i><i>i</i><i>p</i><i>.</i><i>9</i><i>f</i><i>y</i><i>m</i><i>.</i><i>c</i><i>o</i><i>m</i></div>
<div class="wm" style="left:2000.7px;top:1200.3px"><i>v</i><i>i</i><i>p</i><i>.</i><i>9</i><i>f</i><i>y</i><i>m</i><i>.</i><i>c</i><i>o</i><i>m</i></div>
</body></html>
